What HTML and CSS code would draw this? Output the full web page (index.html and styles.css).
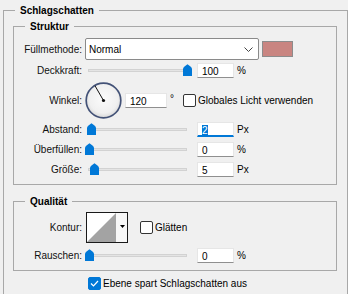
FILE: index.html
```html
<!DOCTYPE html>
<html lang="de">
<head>
    <meta charset="UTF-8">
    <title>Schlagschatten</title>
    <link rel="stylesheet" href="styles.css">
</head>
<body>
    <fieldset class="group group-main">
        <legend>Schlagschatten</legend>

        <fieldset class="group group-sub">
            <legend>Struktur</legend>

            <div class="row row-select">
                <span class="lbl">Füllmethode:</span>
                <div class="select">
                    <span>Normal</span>
                    <svg class="chevron" width="9" height="5" viewBox="0 0 9 5"><polyline points="0.5,0.5 4.5,4.5 8.5,0.5" fill="none" stroke="#444" stroke-width="1"/></svg>
                </div>
                <div class="swatch"></div>
            </div>

            <div class="row row-num row-opacity">
                <span class="lbl">Deckkraft:</span>
                <div class="slider">
                    <div class="track"></div>
                    <svg class="thumb" style="left: 98px" width="9" height="12" viewBox="0 0 9 12"><path d="M0 5 Q0 3.5 1.5 2.5 L4.5 0.3 L7.5 2.5 Q9 3.5 9 5 V12 H0 Z" fill="#0078d7"/></svg>
                </div>
                <div class="num">100</div>
                <span class="unit">%</span>
            </div>

            <div class="row row-angle">
                <span class="lbl">Winkel:</span>
                <svg class="dial" width="37" height="37" viewBox="0 0 37 37">
                    <defs>
                        <radialGradient id="dialFill" cx="50%" cy="45%" r="55%">
                            <stop offset="0" stop-color="#fbfbfb"/>
                            <stop offset="0.75" stop-color="#f0f0f0"/>
                            <stop offset="1" stop-color="#d8d8d8"/>
                        </radialGradient>
                    </defs>
                    <circle cx="18.5" cy="18.5" r="17.3" fill="url(#dialFill)" stroke="#435277" stroke-width="1.7"/>
                    <line x1="18.5" y1="18.5" x2="10" y2="3.8" stroke="#111" stroke-width="1"/>
                    <circle cx="18.5" cy="18.5" r="1.6" fill="#111"/>
                </svg>
                <div class="num num-wide">120</div>
                <span class="deg">°</span>
                <label class="check"><span class="box"></span>Globales Licht verwenden</label>
            </div>

            <div class="row row-num row-distance">
                <span class="lbl">Abstand:</span>
                <div class="slider">
                    <div class="track"></div>
                    <svg class="thumb" style="left: 2px" width="9" height="12" viewBox="0 0 9 12"><path d="M0 5 Q0 3.5 1.5 2.5 L4.5 0.3 L7.5 2.5 Q9 3.5 9 5 V12 H0 Z" fill="#0078d7"/></svg>
                </div>
                <div class="num num-focus"><span class="sel">2</span></div>
                <span class="unit">Px</span>
            </div>

            <div class="row row-num row-next">
                <span class="lbl">Überfüllen:</span>
                <div class="slider">
                    <div class="track"></div>
                    <svg class="thumb" style="left: 0px" width="9" height="12" viewBox="0 0 9 12"><path d="M0 5 Q0 3.5 1.5 2.5 L4.5 0.3 L7.5 2.5 Q9 3.5 9 5 V12 H0 Z" fill="#0078d7"/></svg>
                </div>
                <div class="num">0</div>
                <span class="unit">%</span>
            </div>

            <div class="row row-num row-next">
                <span class="lbl">Größe:</span>
                <div class="slider">
                    <div class="track"></div>
                    <svg class="thumb" style="left: 5px" width="9" height="12" viewBox="0 0 9 12"><path d="M0 5 Q0 3.5 1.5 2.5 L4.5 0.3 L7.5 2.5 Q9 3.5 9 5 V12 H0 Z" fill="#0078d7"/></svg>
                </div>
                <div class="num">5</div>
                <span class="unit">Px</span>
            </div>
        </fieldset>

        <fieldset class="group group-sub group-quality">
            <legend>Qualität</legend>

            <div class="row row-contour">
                <span class="lbl">Kontur:</span>
                <svg class="contour" width="42" height="31" viewBox="0 0 42 31">
                    <rect x="0.5" y="0.5" width="41" height="30" fill="#fff" stroke="#1a1a1a"/>
                    <polygon points="1,30 30,1 30,30" fill="#a3a3a3"/>
                    <rect x="30" y="1" width="11" height="29" fill="#f7f7f7"/>
                    <polygon points="34,13 39,13 36.5,16" fill="#000"/>
                </svg>
                <label class="check check-smooth"><span class="box"></span>Glätten</label>
            </div>

            <div class="row row-num row-noise">
                <span class="lbl">Rauschen:</span>
                <div class="slider">
                    <div class="track"></div>
                    <svg class="thumb" style="left: 0px" width="9" height="12" viewBox="0 0 9 12"><path d="M0 5 Q0 3.5 1.5 2.5 L4.5 0.3 L7.5 2.5 Q9 3.5 9 5 V12 H0 Z" fill="#0078d7"/></svg>
                </div>
                <div class="num">0</div>
                <span class="unit">%</span>
            </div>
        </fieldset>

        <label class="check check-knockout">
            <span class="box box-on"><svg width="11" height="11" viewBox="0 0 11 11"><polyline points="2,5.5 4.5,8 9,3" fill="none" stroke="#fff" stroke-width="1.2"/></svg></span>Ebene spart Schlagschatten aus
        </label>
    </fieldset>
</body>
</html>
```
FILE: styles.css
```css
body {
    margin: 0;
    background-color: #f0f0f0;
    font-family: "Liberation Sans", Arial, sans-serif;
    font-size: 10px;
    line-height: 13px;
    color: #000;
    overflow: hidden;
}
.group {
    border: 1px solid #a8a8a8;
    min-width: 0;
}
.group legend {
    font-weight: bold;
    color: #000;
    padding: 0 5px;
    line-height: 13px;
}
.group-main {
    margin: 4px 0 0 3px;
    padding: 3px 10px 20px 9px;
}
.group-main > legend {
    margin-left: 2px;
}
.group-sub {
    margin: 0;
    padding: 5px 0 7px 0;
}
.group-sub > legend {
    margin-left: 11px;
}
.group-quality {
    margin-top: 10px;
    padding-top: 4px;
}
.row {
    display: flex;
    align-items: center;
}
.lbl {
    width: 68px;
    margin-right: 3px;
    text-align: right;
    flex-shrink: 0;
    color: #111;
}
.row-select {
    height: 22px;
}
.select {
    width: 174px;
    height: 22px;
    box-sizing: border-box;
    border: 1px solid #8a8a8a;
    border-radius: 2px;
    background: #fff;
    display: flex;
    align-items: center;
    justify-content: space-between;
    padding: 0 5px 0 3px;
}
.swatch {
    width: 31px;
    height: 16px;
    box-sizing: border-box;
    margin-left: 3px;
    border: 1px solid #8c8c8c;
    background: #c98581;
}
.row-num {
    height: 15px;
}
.row-opacity {
    margin-top: 3px;
}
.row-distance {
    margin-top: 3px;
}
.row-next {
    margin-top: 5px;
}
.slider {
    position: relative;
    width: 107px;
    height: 15px;
    box-sizing: border-box;
    padding: 0 5px 0 3px;
    display: flex;
    align-items: center;
    margin-right: 5px;
}
.track {
    flex: 1;
    height: 3px;
    box-sizing: border-box;
    background: #e4e4e4;
    border: 1px solid #d2d2d2;
}
.thumb {
    position: absolute;
    top: 1px;
}
.num {
    width: 37px;
    height: 15px;
    box-sizing: border-box;
    background: #fff;
    border: 1px solid #e6e6e6;
    border-bottom-color: #8f8f8f;
    padding: 1px 0 0 4px;
    line-height: 13px;
}
.num-wide {
    width: 42px;
    margin-left: 3px;
}
.num-focus {
    border-bottom: 2px solid #0078d7;
}
.sel {
    background: #0078d7;
    color: #fff;
}
.unit {
    margin-left: 3px;
}
.row-angle {
    height: 37px;
    margin-top: 4px;
}
.dial {
    display: block;
}
.deg {
    width: 13px;
    margin-left: 3px;
    align-self: flex-start;
    margin-top: 10px;
}
.check {
    display: flex;
    align-items: center;
}
.box {
    width: 13px;
    height: 13px;
    box-sizing: border-box;
    border: 1px solid #333;
    border-radius: 2px;
    background: #fff;
    margin-right: 2px;
    display: flex;
    align-items: center;
    justify-content: center;
}
.box-on {
    background: #0078d7;
    border-color: #0078d7;
}
.row-contour {
    height: 31px;
}
.contour {
    display: block;
    margin-left: 1px;
}
.check-smooth {
    margin-left: 12px;
}
.row-noise {
    margin-top: 5px;
}
.check-knockout {
    margin: 6px 0 0 75px;
}
```
